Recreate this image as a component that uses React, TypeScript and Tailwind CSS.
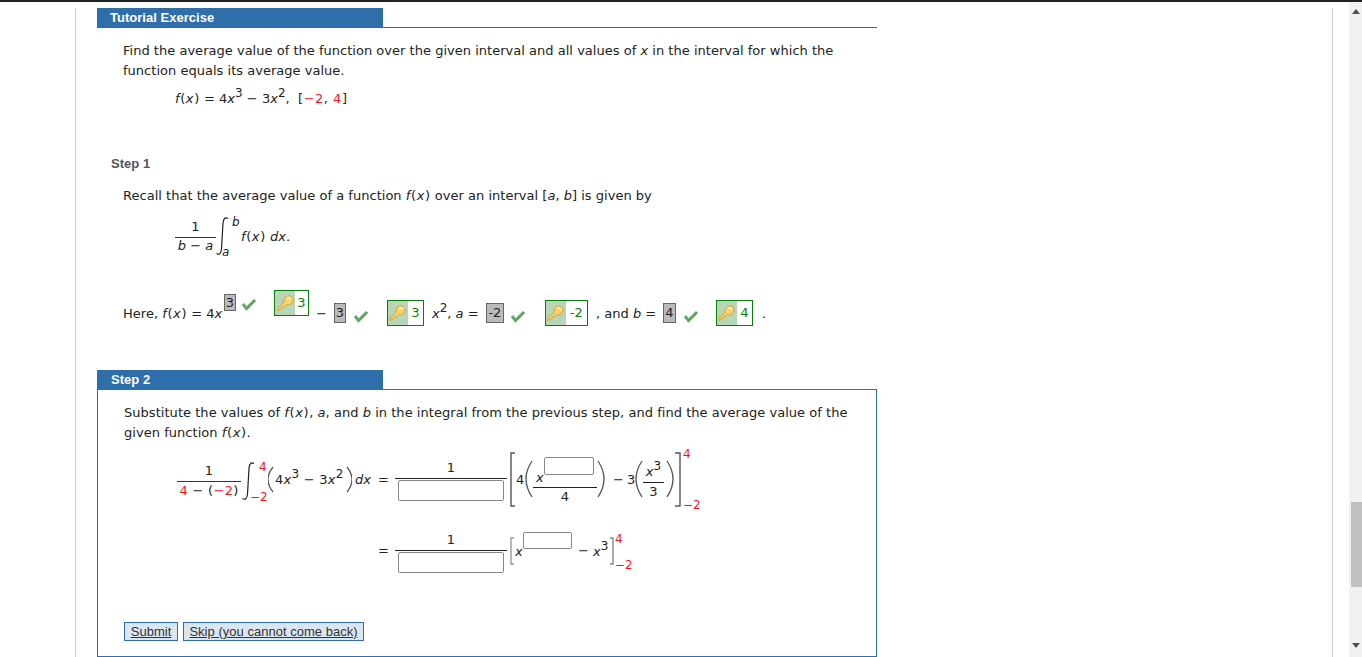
import React from "react";

const V = "font-['DejaVu_Sans','Verdana',sans-serif]";
const A = "font-['Liberation_Sans',Arial,sans-serif]";

const Sup = ({ children }: { children: React.ReactNode }) => (
  <span className="text-[12px] align-[6px] leading-[0]">{children}</span>
);
const I = ({ children }: { children: React.ReactNode }) => <i>{children}</i>;
const R = ({ children }: { children: React.ReactNode }) => <span className="text-[#f01818]">{children}</span>;
const F = () => (
  <span className="tracking-[0.6px]">
    <I>f</I>(<I>x</I>)
  </span>
);

const Check = ({ mt, ml }: { mt: string; ml: string }) => (
  <svg className={`${mt} ${ml} shrink-0`} width="16" height="14" viewBox="0 0 16 14">
    <path d="M2 6 L5.5 10.5 L14 2" fill="none" stroke="#63a965" strokeWidth="3" strokeLinejoin="miter" />
    <path d="M5.5 11.5 L14.5 2.5" fill="none" stroke="#4d8f50" strokeWidth="0.8" />
  </svg>
);

const Key = () => (
  <svg width="19" height="19" viewBox="0 0 19 19">
    <path d="M1.5 14.5 L8 8.5 C7.5 4 11 1 14 2 C17.5 3 18 7.5 15 10 C13.5 11 12 11 10.5 10.5 L8.5 12.5 L7 12.5 L6.5 14 L5 14 L4.5 15.5 L3 15.5 L2.5 17 Z" fill="#f8d56c" stroke="#d8a035" strokeWidth="1" strokeLinejoin="round" />
    <path d="M11 4.5 C12 3.5 14 3.5 15 5" fill="none" stroke="#fff4c0" strokeWidth="1.4" />
  </svg>
);

const KeyBox = ({ v, w, mt, ml }: { v: string; w: string; mt: string; ml: string }) => (
  <span className={`flex h-[26px] ${w} ${mt} ${ml} shrink-0 border border-[#0a7d0a] bg-white`}>
    <span className="flex h-full w-[20px] items-center justify-center bg-[#b7d6b7]">
      <Key />
    </span>
    <span className="flex-1 text-center text-[13px] leading-[24px] text-[#0a7d0a]">{v}</span>
  </span>
);

const IntegralSvg = ({ h = 38, w = 13 }: { h?: number; w?: number }) => (
  <svg width={w} height={h} viewBox={`0 0 ${w} ${h}`} className="shrink-0">
    <path d={`M${w - 1} 1.5 C${w - 4} -0.5 ${w - 5.5} 2 ${w - 6} 6 L${w - 7.5} ${h - 6} C${w - 8} ${h - 1} ${w - 10} ${h} ${w - 12.5} ${h - 1.5}`} fill="none" stroke="#222" strokeWidth="1.2" />
  </svg>
);

const Paren = ({ h, w = 8, right = false, color = "#555" }: { h: number; w?: number; right?: boolean; color?: string }) => (
  <svg width={w} height={h} viewBox={`0 0 ${w} ${h}`} className="shrink-0">
    <path d={right ? `M1 1 Q${w + 5} ${h / 2} 1 ${h - 1}` : `M${w - 1} 1 Q-5 ${h / 2} ${w - 1} ${h - 1}`} fill="none" stroke={color} strokeWidth="1.3" />
  </svg>
);

const Bracket = ({ h, w = 5, right = false, color = "#555" }: { h: number; w?: number; right?: boolean; color?: string }) => (
  <svg width={w} height={h} viewBox={`0 0 ${w} ${h}`} className="shrink-0">
    <path d={right ? `M0 1 H${w - 1} V${h - 1} H0` : `M${w} 1 H1 V${h - 1} H${w}`} fill="none" stroke={color} strokeWidth="1.4" />
  </svg>
);

const Input = ({ w, h, mt = "" }: { w: string; h: string; mt?: string }) => (
  <span className={`block ${w} ${h} ${mt} shrink-0 rounded-[2px] border border-[#888] bg-white`} />
);

const Btn = ({ w, children }: { w: string; children: React.ReactNode }) => (
  <button className={`h-[19px] ${w} whitespace-nowrap border border-[#2e6eaa] bg-[#dce6f1] text-[13px] leading-[17px] text-[#333] underline`}>{children}</button>
);

const greyBox = "shrink-0 border border-[#666] bg-[#bbbbbb] text-center";

export default function App() {
  return (
    <div className={`flex h-[657px] overflow-hidden border-t-2 border-[#222] bg-white text-[13px] leading-5 tracking-[0.02px] text-[#222] ${V}`}>
      <div className="flex-1 pl-[75px]">
        <div className="h-full w-[1258px] border-x border-[#cccccc] pl-[21px]">
          <div className="w-[780px]">
            <div className={`mt-[6px] border-b border-[#2e6eaa] ${A}`}>
              <div className="h-[19px] w-[286px] bg-[#2e6eaa] pl-[13px] text-[13px] font-bold leading-[19px] text-white">Tutorial Exercise</div>
            </div>

            <p className="ml-[26px] mt-[13px] w-[730px]">
              Find the average value of the function over the given interval and all values of <I>x</I> in the interval for which the function equals its average value.
            </p>
            <p className="ml-[78px] mt-[8px] whitespace-nowrap">
              <F /> = 4<I>x</I><Sup>3</Sup> − 3<I>x</I><Sup>2</Sup>,&nbsp; <span className="tracking-[0.5px]">[<R>−2</R>, <R>4</R>]</span>
            </p>

            <h3 className={`ml-[14px] mt-[45px] text-[13px] font-bold leading-5 text-[#555] ${A}`}>Step 1</h3>

            <p className="ml-[26px] mt-[12px]">
              Recall that the average value of a function <F /> over an interval [<I>a</I>, <I>b</I>] is given by
            </p>

            <div className="ml-[78px] mt-[9px] flex h-[42px] items-start">
              <span className="mt-[2px] flex w-[41px] flex-col items-center">
                <span className="h-[20px] leading-5">1</span>
                <span className="h-px w-full bg-[#333]" />
                <span className="leading-[15px]"><I>b</I> − <I>a</I></span>
              </span>
              <span className="mt-[2px]"><IntegralSvg /></span>
              <span className="-ml-[12px] flex h-[44px] w-[23px] flex-col justify-between pl-[5px] text-[12px] leading-[14px]">
                <I><span className="ml-[10px]">b</span></I>
                <I>a</I>
              </span>
              <span className="ml-[1px] mt-[12px]"><F /> <I>dx</I>.</span>
            </div>

            <div className="ml-[26px] mt-[33px] flex h-[40px] items-start">
              <span className="mt-[14px] w-[101px] shrink-0 whitespace-nowrap">Here, <F /> = 4<I>x</I></span>
              <span className={`mt-[4px] h-[17px] w-[12px] leading-[15px] ${greyBox}`}>3</span>
              <Check mt="mt-[8px]" ml="ml-[5px]" />
              <KeyBox v="3" w="w-[35px]" mt="mt-0" ml="ml-[17px]" />
              <span className="ml-[7px] mt-[14px]">−</span>
              <span className={`ml-[7px] mt-[13px] h-[20px] w-[12px] leading-[18px] ${greyBox}`}>3</span>
              <Check mt="mt-[20px]" ml="ml-[7px]" />
              <KeyBox v="3" w="w-[37px]" mt="mt-[10px]" ml="ml-[18px]" />
              <span className="ml-[8px] mt-[14px] w-[54px] shrink-0 whitespace-nowrap"><I>x</I><Sup>2</Sup>, <I>a</I> =</span>
              <span className={`mt-[13px] h-[20px] w-[18px] leading-[18px] ${greyBox}`}>-2</span>
              <Check mt="mt-[20px]" ml="ml-[6px]" />
              <KeyBox v="-2" w="w-[43px]" mt="mt-[10px]" ml="ml-[19px]" />
              <span className="ml-[8px] mt-[14px] w-[67px] shrink-0 whitespace-nowrap">, and <I>b</I> =</span>
              <span className={`mt-[13px] h-[20px] w-[13px] leading-[18px] ${greyBox}`}>4</span>
              <Check mt="mt-[20px]" ml="ml-[7px]" />
              <KeyBox v="4" w="w-[37px]" mt="mt-[10px]" ml="ml-[17px]" />
              <span className="ml-[9px] mt-[14px]">.</span>
            </div>

            <div className={`mt-[40px] ${A}`}>
              <div className="h-[19px] w-[286px] bg-[#2e6eaa] pl-[14px] text-[13px] font-bold leading-[19px] text-white">Step 2</div>
            </div>

            <div className="h-[268px] w-[780px] border border-[#2e6eaa] pl-[26px]">
              <p className="mt-[13px] w-[740px] tracking-[0.04px]">
                Substitute the values of <F />, <I>a</I>, and <I>b</I> in the integral from the previous step, and find the average value of the given function <F />.
              </p>

              <div className="-ml-[26px] mt-[8px] flex h-[62px] items-start pl-[79px]">
                <span className="mt-[10px] flex w-[64px] shrink-0 flex-col items-center">
                  <span className="h-[20px] leading-5">1</span>
                  <span className="h-px w-full bg-[#333]" />
                  <span className="whitespace-nowrap leading-[18px] tracking-[0.3px]"><R>4</R> − (<R>−2</R>)</span>
                </span>
                <span className="mt-[11px]"><IntegralSvg w={14} /></span>
                <span className="-ml-[5px] mt-[9px] flex h-[44px] w-[18px] shrink-0 flex-col justify-between text-[12px] leading-[14px]">
                  <span className="ml-[9px]"><R>4</R></span>
                  <R>−2</R>
                </span>
                <span className="mt-[15px]"><Paren h={27} w={6} /></span>
                <span className="ml-[1px] mt-[19px] w-[71px] shrink-0 whitespace-nowrap tracking-[0.25px]">4<I>x</I><Sup>3</Sup> − 3<I>x</I><Sup>2</Sup></span>
                <span className="mt-[15px]"><Paren h={27} w={6} right /></span>
                <span className="ml-[3px] mt-[19px] w-[23px] shrink-0"><I>dx</I></span>
                <span className="mt-[19px] w-[17px] shrink-0">=</span>
                <span className="mt-[7px] flex w-[112px] shrink-0 flex-col items-center">
                  <span className="h-[20px] leading-5">1</span>
                  <span className="h-px w-full bg-[#222]" />
                  <Input w="w-[106px]" h="h-[21px]" mt="mt-[1px]" />
                </span>
                <span className="ml-[3px] mt-[1px]"><Bracket h={55} /></span>
                <span className="ml-[1px] mt-[19px] w-[8px]">4</span>
                <span className="ml-[1px] mt-[9px]"><Paren h={38} w={8} /></span>
                <span className="mt-[6px] flex w-[64px] shrink-0 flex-col">
                  <span className="flex h-[30px] items-start pl-[3px]">
                    <span className="mt-[11px] w-[8px] leading-[20px]"><I>x</I></span>
                    <Input w="w-[50px]" h="h-[18px]" />
                  </span>
                  <span className="h-px w-full bg-[#222]" />
                  <span className="text-center leading-[18px]">4</span>
                </span>
                <span className="mt-[9px]"><Paren h={38} w={8} right /></span>
                <span className="ml-[8px] mt-[19px] w-[14px]">−</span>
                <span className="mt-[19px] w-[7px]">3</span>
                <span className="ml-[1px] mt-[9px]"><Paren h={38} w={8} /></span>
                <span className="mt-[9px] flex w-[21px] shrink-0 flex-col items-center">
                  <span className="h-[22px] whitespace-nowrap leading-[24px]"><I>x</I><Sup>3</Sup></span>
                  <span className="h-px w-full bg-[#222]" />
                  <span className="leading-[18px]">3</span>
                </span>
                <span className="ml-[2px] mt-[9px]"><Paren h={38} w={8} right /></span>
                <span className="ml-[1px] mt-[1px]"><Bracket h={55} w={6} right /></span>
                <span className="ml-[2px] -mt-[4px] flex h-[65px] flex-col justify-between text-[12px] leading-[14px]">
                  <R>4</R>
                  <R>−2</R>
                </span>
              </div>

              <div className="-ml-[26px] mt-[17px] flex h-[46px] items-start pl-[280px]">
                <span className="mt-[11px] w-[17px] shrink-0">=</span>
                <span className="flex w-[112px] shrink-0 flex-col items-center">
                  <span className="h-[20px] leading-5">1</span>
                  <span className="h-px w-full bg-[#222]" />
                  <Input w="w-[106px]" h="h-[21px]" mt="mt-[1px]" />
                </span>
                <span className="ml-[3px] mt-[7px]"><Bracket h={28} w={4} color="#999" /></span>
                <span className="ml-[1px] mt-[12px] w-[8px] leading-5"><I>x</I></span>
                <Input w="w-[49px]" h="h-[17px]" mt="mt-[2px]" />
                <span className="ml-[6px] mt-[11px] w-[15px]">−</span>
                <span className="mt-[12px] w-[17px] shrink-0 whitespace-nowrap"><I>x</I><Sup>3</Sup></span>
                <span className="mt-[7px]"><Bracket h={28} w={4} right color="#888" /></span>
                <span className="ml-[1px] mt-[2px] flex h-[40px] flex-col justify-between text-[12px] leading-[14px]">
                  <R>4</R>
                  <R>−2</R>
                </span>
              </div>

              <div className={`mt-[46px] flex gap-[5px] ${A}`}>
                <Btn w="w-[54px]">Submit</Btn>
                <Btn w="w-[181px]">Skip (you cannot come back)</Btn>
              </div>
            </div>
          </div>
        </div>
      </div>

      <div className="flex h-full w-[13px] shrink-0 flex-col items-end bg-[#f1f1f1]">
        <svg className="mr-[2px] mt-[7px]" width="8" height="5" viewBox="0 0 8 5"><path d="M4 0 L8 5 H0 Z" fill="#505050" /></svg>
        <div className="mt-[488px] h-[85px] w-[11px] bg-[#c1c1c1]" />
        <svg className="mr-[2px] mt-[56px]" width="8" height="5" viewBox="0 0 8 5"><path d="M0 0 H8 L4 5 Z" fill="#505050" /></svg>
      </div>
    </div>
  );
}
